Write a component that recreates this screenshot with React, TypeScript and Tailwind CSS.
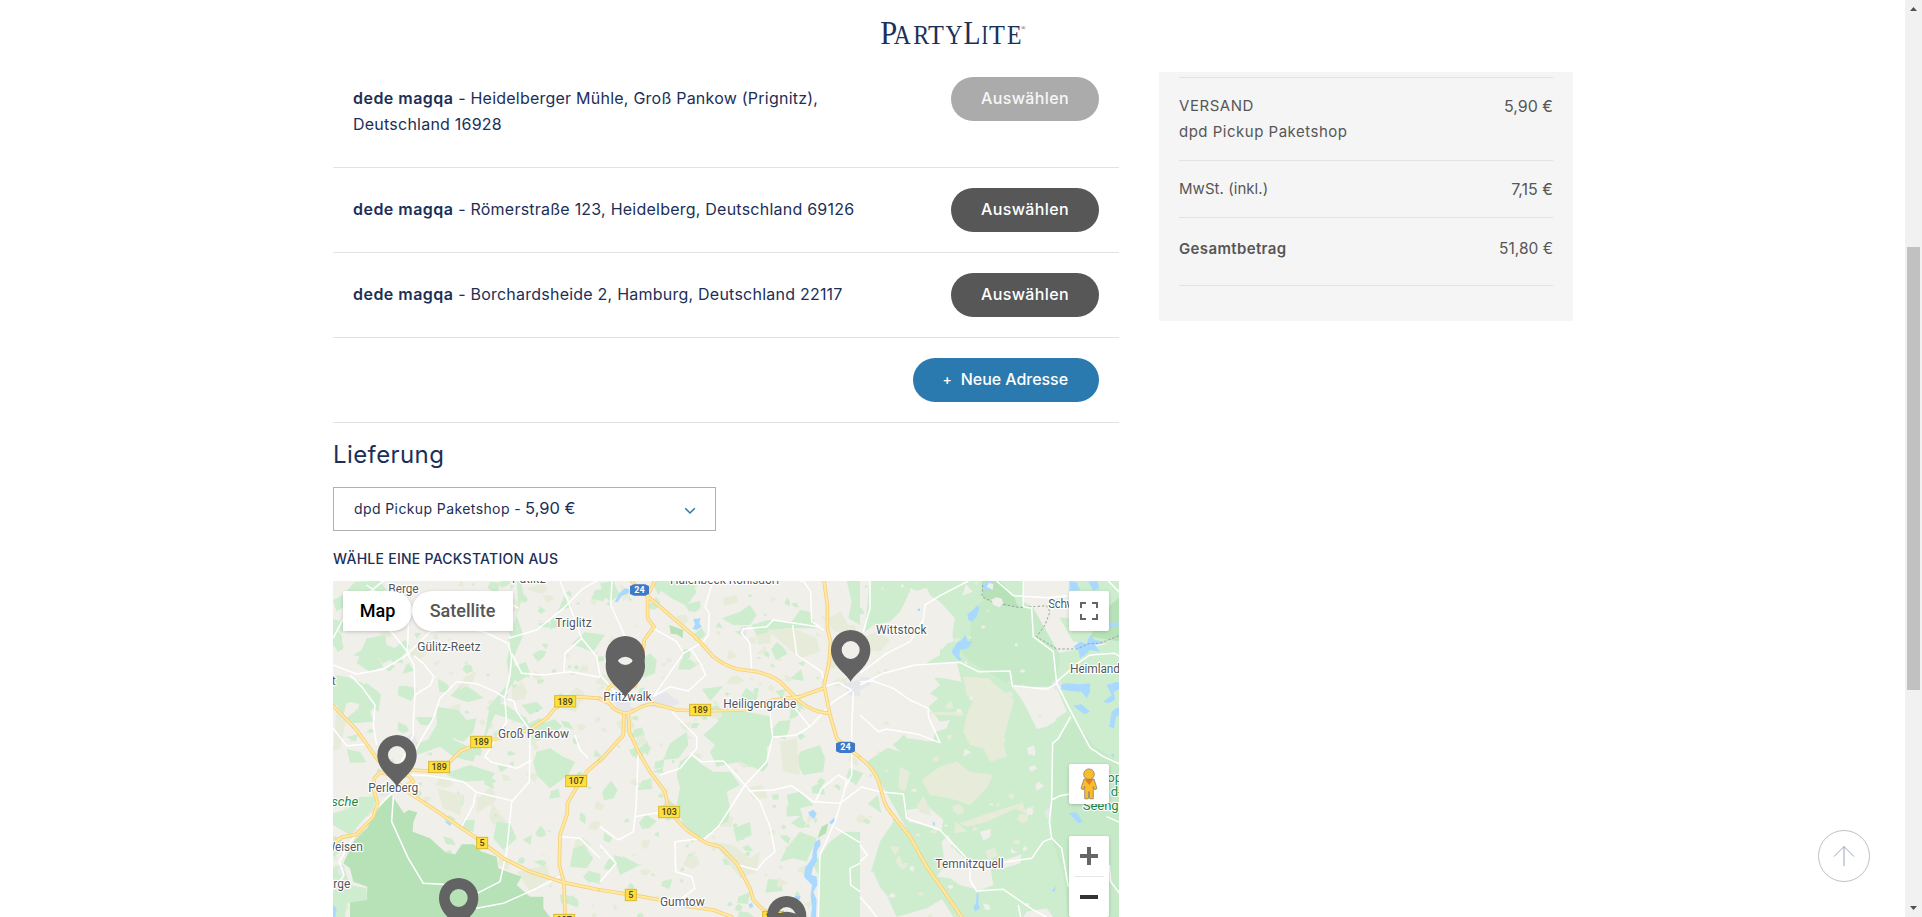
import React from "react";

type Shape = { fill: string; d: string };

const GREEN = "#ceedcf";
const FOREST = "#b7e2b8";
const DRY = "#e7ecda";
const LAND = "#f0efea";
const WATER = "#a9d9ff";
const TOWN = "#e6e7eb";

/* Small deterministic generator for the field and grove texture. */
function makePatches(count: number, x0: number, x1: number, seed: number, colors: string[], size: number): Shape[] {
  let s = seed;
  const rnd = () => {
    s = (s * 16807) % 2147483647;
    return s / 2147483647;
  };
  const out: Shape[] = [];
  for (let i = 0; i < count; i++) {
    const cx = x0 + rnd() * (x1 - x0);
    const cy = 18 + rnd() * 1008;
    const r = 5 + rnd() * rnd() * size;
    const n = 3 + Math.floor(rnd() * 4);
    const turn = rnd() * 6;
    const pts: string[] = [];
    for (let k = 0; k < n; k++) {
      const a = turn + (k / n) * Math.PI * 2;
      const q = r * (0.4 + rnd() * 1.1);
      pts.push(`${(cx + Math.cos(a) * q * 1.2).toFixed(0)},${(cy + Math.sin(a) * q).toFixed(0)}`);
    }
    out.push({ fill: colors[Math.floor(rnd() * colors.length)], d: `M${pts.join("L")}Z` });
  }
  return out;
}

const fields = makePatches(420, 9, 1640, 4711, [GREEN, DRY, GREEN, DRY, GREEN], 34);
const eastFields = makePatches(70, 1640, 2130, 977, [DRY, LAND], 20);

const west: Shape[] = [
  { fill: GREEN, d: "M9,75L40,60L75,20L150,18L170,45L120,60L140,85L90,100L60,80L20,110Z" },
  { fill: GREEN, d: "M110,190L165,180L170,210L145,250L160,275L120,290L80,265Z" },
  { fill: GREEN, d: "M180,230L225,195L240,215L215,245L220,265L185,262Z" },
  { fill: GREEN, d: "M9,300L50,305L100,325L75,355L90,370L50,385L40,420L20,390L9,395Z" },
  { fill: GREEN, d: "M95,355L140,345L145,375L120,410L130,440L70,445L50,430L85,400Z" },
  { fill: GREEN, d: "M320,395L385,405L410,435L440,430L430,470L400,500L370,490L330,505L290,500L320,450Z" },
  { fill: GREEN, d: "M260,505L340,480L395,505L440,530L430,560L370,545L330,515L260,540Z" },
  { fill: GREEN, d: "M360,590L420,570L495,595L480,615L400,620L350,600Z" },
  { fill: GREEN, d: "M530,350L560,310L550,250L580,180L560,120L580,60L575,20L560,18L565,90L550,160L530,260L540,320L480,390L460,500L490,430Z" },
  { fill: GREEN, d: "M470,400L500,380L535,395L590,430L600,455L560,440L490,415Z" },
  { fill: GREEN, d: "M620,530L660,520L700,545L735,560L715,600L660,640L620,600L610,560Z" },
  { fill: GREEN, d: "M9,715L60,700L90,665L140,665L130,700L60,780L9,750Z" },
  { fill: GREEN, d: "M730,820L760,810L790,850L770,880L720,875Z" },
  { fill: GREEN, d: "M500,740L540,745L560,790L520,825L490,790Z" },
  { fill: GREEN, d: "M575,390L620,380L640,400L600,420Z" },
  { fill: DRY, d: "M20,390L50,430L30,520L9,530Z" },
  { fill: DRY, d: "M560,890L650,870L660,910L600,950Z" },
  { fill: DRY, d: "M320,640L400,660L390,720L340,700Z" },
  { fill: FOREST, d: "M158,680L185,660L212,700L222,715L235,705L262,712L250,742L248,770L300,790L348,833L376,838L395,808L432,808L455,830L500,845L505,880L545,895L575,905L560,930L600,965L640,965L640,1000L660,1026L60,1026L60,975L110,975L112,935L70,920L60,880L40,865L70,800L110,760Z" },
  { fill: GREEN, d: "M9,880L40,870L60,930L110,940L110,975L50,985L45,1026L9,1026Z" },
  { fill: WATER, d: "M9,990L20,1000L16,1026L9,1026Z" },
  { fill: WATER, d: "M345,737L352,740L364,746L360,753L347,742Z" },
  { fill: WATER, d: "M617,404L626,408L622,412Z" },
  { fill: TOWN, d: "M140,640L170,632L180,660L150,668Z" },
  { fill: TOWN, d: "M222,490L250,475L262,500L236,516Z" },
  { fill: TOWN, d: "M512,360L535,358L530,382L512,380Z" },
  { fill: TOWN, d: "M22,880L45,875L42,895L28,903Z" },
];

const middle: Shape[] = [
  { fill: GREEN, d: "M0,25L40,18L60,60L30,80L10,60Z" },
  { fill: GREEN, d: "M365,130L420,110L450,90L470,120L450,150L400,150Z" },
  { fill: GREEN, d: "M455,150L505,135L575,140L600,105L630,110L650,160L560,160L470,180Z" },
  { fill: GREEN, d: "M130,250L150,235L170,255L165,295L130,310Z" },
  { fill: GREEN, d: "M310,480L365,430L365,410L440,410L515,425L510,460L530,480L515,500L500,520L505,570L490,590L420,560L350,575L330,530L345,510Z" },
  { fill: GREEN, d: "M210,505L260,470L265,510L235,550L190,555Z" },
  { fill: GREEN, d: "M240,560L270,540L300,565L340,590L390,590L420,630L380,650L390,700L385,740L340,760L300,800L250,750L230,690L240,640L230,600Z" },
  { fill: GREEN, d: "M600,530L660,510L675,550L670,590L610,600L590,560Z" },
  { fill: GREEN, d: "M560,660L600,650L640,690L600,700L610,730L570,710Z" },
  { fill: GREEN, d: "M740,18L780,18L780,150L745,130L755,80Z" },
  { fill: GREEN, d: "M690,800L730,770L780,770L780,1026L655,1026L655,900L640,870Z" },
  { fill: GREEN, d: "M600,770L650,790L620,860L580,850L540,860L560,820Z" },
  { fill: GREEN, d: "M400,760L450,740L455,780L410,800Z" },
  { fill: GREEN, d: "M40,840L80,850L120,870L60,900Z" },
  { fill: DRY, d: "M500,165L580,160L650,190L660,230L600,250L560,215Z" },
  { fill: DRY, d: "M340,800L400,810L450,850L480,830L470,890L420,910Z" },
  { fill: DRY, d: "M540,500L590,490L600,600L550,590Z" },
  { fill: FOREST, d: "M208,150L250,165L248,190L230,178L212,176Z" },
  { fill: FOREST, d: "M652,790L665,755L685,745L678,775Z" },
  { fill: WATER, d: "M280,132L302,130L298,145L305,155L290,165L278,162L285,148Z" },
  { fill: WATER, d: "M44,80L58,55L75,40L88,42L85,55L66,62L52,82Z" },
  { fill: WATER, d: "M625,712L640,704L650,716L642,732L630,722Z" },
  { fill: WATER, d: "M688,742L702,728L706,740L692,748Z" },
  { fill: WATER, d: "M585,963L601,962L600,974L586,974Z" },
  { fill: WATER, d: "M446,988L456,984L460,995L450,1000Z" },
  { fill: WATER, d: "M645,800L660,792L662,808L650,830L652,855L638,880L634,900L650,905L652,930L640,950L650,975L648,1026L632,1026L636,1000L632,960L636,930L612,905L615,880L636,850L640,820Z" },
  { fill: TOWN, d: "M140,370L200,350L240,385L200,400L150,395Z" },
  { fill: TOWN, d: "M40,375L90,380L95,410L55,408Z" },
  { fill: TOWN, d: "M730,325L780,315L780,365L745,360Z" },
  { fill: TOWN, d: "M420,155L440,152L440,178L424,180Z" },
];

const east: Shape[] = [
  { fill: GREEN, d: "M28,18L150,18L150,50L120,110L90,140L40,150L15,170Z" },
  { fill: GREEN, d: "M100,18L500,18L500,60L560,240L786,200L786,1026L280,1026L200,900L150,780L60,620L20,560L50,540L110,500L140,470L110,440L240,330L190,270L240,240L240,210L280,200L270,120L210,90L200,60Z" },
  { fill: GREEN, d: "M786,18L786,210L640,200L600,130L630,18Z" },
  { fill: GREEN, d: "M60,660L150,780L200,880L250,970L200,1000L110,1026L80,960L30,900L60,800L100,740Z" },
  { fill: "#c6e9c8", d: "M335,110L375,70L520,100L600,240L590,330L520,340L450,330L400,300L330,260L300,225L330,190Z" },
  { fill: "#c6e9c8", d: "M580,500L640,430L700,510L786,570L786,1026L625,1026L610,900L575,790Z" },
  { fill: FOREST, d: "M365,18L420,18L460,60L475,98L430,92L370,70Z" },
  { fill: FOREST, d: "M740,100L786,60L786,200L690,185Z" },
  { fill: LAND, d: "M130,100L145,55L200,38L210,60L240,80L285,130L275,190L245,225L215,205L190,150L165,115Z" },
  { fill: LAND, d: "M490,18L625,18L630,130L580,125L520,95L490,80Z" },
  { fill: LAND, d: "M0,290L60,250L110,220L140,200L150,240L200,270L290,260L305,320L250,310L180,305L110,330L150,370L200,350L235,370L205,395L240,440L270,435L260,460L215,475L220,500L140,490L120,460L60,470L120,530L60,510L0,545Z" },
  { fill: LAND, d: "M455,335L590,335L620,410L590,430L585,440L560,455L530,462L500,400L480,365Z" },
  { fill: LAND, d: "M390,462L410,464L407,488L389,484Z" },
  { fill: LAND, d: "M505,578L522,570L532,580L515,590Z" },
  { fill: LAND, d: "M360,770L392,762L392,785L370,797Z" },
  { fill: LAND, d: "M140,705L205,695L250,735L245,765L190,750L145,740Z" },
  { fill: LAND, d: "M245,800L265,780L290,830L330,860L390,870L400,930L360,945L300,930L270,910L230,905L255,870Z" },
  { fill: LAND, d: "M420,860L485,838L480,865L430,880Z" },
  { fill: LAND, d: "M0,780L40,760L110,705L100,730L60,790L20,850L0,850Z" },
  { fill: LAND, d: "M0,900L40,890L70,960L80,1026L0,1026Z" },
  { fill: LAND, d: "M500,1010L560,1000L580,1026L490,1026Z" },
  { fill: DRY, d: "M310,305L385,310L400,325L462,375L440,455L430,500L440,545L390,560L370,520L330,510L310,470L320,420L340,375L320,360Z" },
  { fill: DRY, d: "M185,615L240,575L290,560L330,590L400,600L380,640L330,690L270,670L210,660Z" },
  { fill: DRY, d: "M300,745L370,720L480,685L470,700L380,740L320,755Z" },
  { fill: DRY, d: "M0,190L50,170L90,195L60,230L0,220Z" },
  { fill: DRY, d: "M120,575L150,590L135,650L115,640Z" },
  { fill: DRY, d: "M205,412L310,412L310,422L205,418Z" },
  { fill: WATER, d: "M322,118L342,102L352,90L358,98L350,125L335,140L325,135Z" },
  { fill: WATER, d: "M275,228L290,205L305,195L315,180L325,200L338,198L325,220L300,225L298,245L306,252L298,258L280,240Z" },
  { fill: WATER, d: "M370,25L395,18L402,35L390,47L372,42Z" },
  { fill: WATER, d: "M628,18L650,22L660,45L630,48Z" },
  { fill: WATER, d: "M685,20L712,18L718,40L700,47Z" },
  { fill: WATER, d: "M725,100L740,125L752,145L770,140L780,150L740,160L715,135Z" },
  { fill: WATER, d: "M640,215L660,200L680,205L690,180L705,195L735,200L705,210L720,230L690,225L675,240L660,250L655,225Z" },
  { fill: WATER, d: "M600,330L620,325L660,328L690,325L690,350L680,370L665,350L630,348L600,342Z" },
  { fill: WATER, d: "M640,392L665,388L690,410L675,418L655,405Z" },
  { fill: WATER, d: "M740,330L770,320L786,325L786,340L762,350L765,375L745,385L730,380L755,360Z" },
  { fill: WATER, d: "M755,410L770,398L786,400L786,415L768,425L762,460L748,455Z" },
  { fill: WATER, d: "M625,715L650,712L668,740L655,745L640,728Z" },
  { fill: WATER, d: "M350,955L356,955L355,985L360,1000L345,1010L340,995L348,985Z" },
  { fill: WATER, d: "M575,948L588,934L584,950Z" },
  { fill: WATER, d: "M172,102L180,100L180,108L174,108Z" },
  { fill: WATER, d: "M752,540L762,536L762,548Z" },
  { fill: WATER, d: "M218,742L225,742L224,752L219,751Z" },
  { fill: TOWN, d: "M575,322L600,312L605,340L585,345Z" },
  { fill: TOWN, d: "M0,305L35,310L30,330L0,345Z" },
  { fill: TOWN, d: "M555,705L570,698L572,725L558,728Z" },
];

const westLanes = [
  "M9,190L40,130L70,90L160,18",
  "M9,270L80,297L160,283L230,240L300,170L395,155L460,170L535,205",
  "M236,120L232,235L252,270L255,360L250,440L250,480L215,560",
  "M240,240L180,165L150,60L110,30",
  "M535,205L545,245L540,300L524,368L495,350L440,326L380,320L330,370L310,430L270,500L238,560",
  "M252,363L270,350L300,332L312,305L280,265L252,242",
  "M524,370L530,440L465,545L485,562L560,580L605,555",
  "M530,372L552,378L560,410L600,465L598,620L545,680L530,830L522,865L510,920L422,965L382,930L280,925L235,850L185,740L190,665",
  "M240,600L300,602L400,620L440,652L545,677",
  "M436,655L430,690L395,755",
  "M190,650L145,695L65,795L28,860L42,900L9,945",
  "M690,18L722,100L755,190L705,235L702,290",
  "M545,235L575,295L640,300L720,290L810,307",
  "M400,150L440,75L500,60L565,100M535,190L620,165L700,100L760,40L800,18",
  "M735,480L750,525L775,550",
  "M9,460L50,512L105,508L150,560",
  "M60,300L95,335L135,390L130,450L140,510",
  "M692,785L750,790L810,850",
  "M420,965L440,1000L520,985L620,940L690,905",
  "M755,190L800,245L810,300",
];

const middleLanes = [
  "M36,18L32,90L60,150L75,185",
  "M160,160L230,200L250,235L160,365",
  "M335,30L315,95L328,115L325,180L310,200L250,235",
  "M275,225L300,262L317,300L265,348L210,335L160,365",
  "M600,18L610,18L632,50L635,140L660,155",
  "M455,285L450,205L425,175L430,162L500,155L520,135L655,155L672,165",
  "M578,150L590,240L665,290L670,310",
  "M672,335L715,322L755,345L700,380L630,455L590,480L518,487L500,560L435,630L355,755L310,795",
  "M510,410L518,487M585,400L630,455",
  "M215,410L290,485L290,520L240,580L180,600",
  "M270,535L305,560L370,558L435,630L480,680L510,755L525,830L495,855L470,885L415,870",
  "M445,648L520,645L575,632L640,680L720,685L780,640",
  "M645,682L665,640L715,600L740,615L730,660L705,740L660,840L655,1026",
  "M115,530L108,700L100,770L55,795L0,755M103,725L205,708",
  "M310,790L225,800L227,890L275,905L285,940L245,970",
  "M760,350L755,460L755,600L735,640",
  "M0,810L48,865L0,920",
  "M705,757L780,803M780,865L750,880L752,930L780,950",
  "M0,300L40,345L60,370",
];

const eastLanes = [
  "M30,18L30,100L10,170",
  "M0,295L80,235L150,200L190,135L195,90L240,62L325,18",
  "M0,330L70,295L165,270L300,262L355,290L450,288L457,332L560,343L590,325",
  "M0,320L40,318L100,340L150,375L205,400L205,425L240,503L175,478L80,462L55,470L0,420",
  "M410,18L460,62L560,68L622,62M490,18L490,95L515,100L520,185L580,230L590,325L625,395L690,518L730,545L786,570",
  "M590,320L660,260L690,240L765,235L786,250",
  "M632,425L595,490L578,505L575,675L568,740L575,790L605,820L625,935",
  "M575,675L600,662L630,657",
  "M0,635L60,650L130,657L140,730L240,765L330,860L330,915L350,948L430,943L520,1005L560,1026",
  "M430,862L515,850L550,800L575,790",
  "M740,725L786,745M748,870L752,920L786,965",
  "M0,810L22,840L0,860M0,965L30,1000L50,1026",
  "M475,990L482,1026M745,18L786,60",
];

const westHighways = [
  "M9,392L80,465L140,550L195,615L240,655L330,715L440,790L520,850L600,890L700,922L810,945",
  "M9,805L35,787L80,778L130,725L143,685L130,640L133,610L150,592L200,605L215,592L240,585L295,588L355,565L392,528L455,502L540,482L600,463L650,430L675,400L740,365L810,370",
  "M810,555L770,590L750,620L712,685L712,715L690,780L688,870L702,922L705,1026",
  "M200,610L235,600L250,620L232,630",
];

const middleHighways = [
  "M95,18L120,45L180,95L290,190L340,245Q370,270 410,282L470,290Q530,305 550,330L600,380Q640,412 685,415",
  "M165,18L143,60L143,130L162,155L133,195L125,260L105,335",
  "M0,372L28,385Q45,412 80,415Q100,410 115,400Q145,385 165,387L230,405L300,408L430,405L520,375L600,365L670,340",
  "M45,325Q5,345 28,385",
  "M72,415L70,480L0,557",
  "M85,415L88,470L115,530L150,590L195,650L207,710L260,765L320,805L360,815L410,865L450,940L460,975L490,1005L540,1026",
  "M672,18L682,90L682,160L692,200L688,260L672,330L690,420L710,490L745,520L780,548",
  "M0,945L110,962L180,975L270,995L340,1005L395,1026",
];

const eastHighways = ["M0,548Q50,585 62,640T90,710L150,785L200,875L260,960L305,1026"];

function Lanes({ paths }: { paths: string[] }) {
  return (
    <g fill="none" stroke="#ffffff" strokeWidth={4.5} strokeLinejoin="round">
      {paths.map((d) => (
        <path key={d} d={d} />
      ))}
    </g>
  );
}

function Highways({ paths }: { paths: string[] }) {
  return (
    <g fill="none" strokeLinejoin="round" strokeLinecap="round">
      {paths.map((d) => (
        <path key={d} d={d} stroke="#f7cf77" strokeWidth={11} />
      ))}
      {paths.map((d) => (
        <path key={d} d={d} stroke="#ffe9a3" strokeWidth={6} />
      ))}
    </g>
  );
}

function Shapes({ items }: { items: Shape[] }) {
  return (
    <g>
      {items.map((s, i) => (
        <path key={i} d={s.d} fill={s.fill} />
      ))}
    </g>
  );
}

function Place({ x, y, w, children }: { x: number; y: number; w: number; children: string }) {
  return (
    <text
      x={x}
      y={y}
      textLength={w}
      className="fill-[#50565e] stroke-white font-['Roboto',sans-serif] text-[36px] [paint-order:stroke]"
      strokeWidth={7}
      strokeLinejoin="round"
    >
      {children}
    </text>
  );
}

function Shield({ x, y, w, children }: { x: number; y: number; w: number; children: string }) {
  return (
    <g>
      <rect x={x} y={y} width={w} height={34} fill="#ffdf3d" stroke="#d9b92c" strokeWidth={3} />
      <text x={x + w / 2} y={y + 27} textAnchor="middle" className="fill-[#4a4220] font-['Roboto',sans-serif] text-[27px] font-medium">
        {children}
      </text>
    </g>
  );
}

function Autobahn({ x, y }: { x: number; y: number }) {
  return (
    <g>
      <path d={`M${x},${y + 5}L${x + 12},${y}H${x + 45}L${x + 57},${y + 5}V${y + 29}L${x + 45},${y + 34}H${x + 12}L${x},${y + 29}Z`} fill="#3d78c9" />
      <text x={x + 28.5} y={y + 26} textAnchor="middle" className="fill-white font-['Roboto',sans-serif] text-[27px] font-bold">
        24
      </text>
    </g>
  );
}

function Pin({ x, y }: { x: number; y: number }) {
  return (
    <path
      transform={`translate(${x} ${y})`}
      fillRule="evenodd"
      fill="#636363"
      d="M0,95C-14,68 -59,48 -59,0A59,60 0 0 1 59,0C59,48 14,68 0,95ZM0,-27A27,27 0 1 0 0,27A27,27 0 1 0 0,-27Z"
    />
  );
}

function MapCanvas() {
  return (
    <svg viewBox="9 18 2358 1008" className="absolute inset-0 h-[336px] w-[786px]">
      <rect x={9} y={18} width={2358} height={1008} fill={LAND} />
      <Shapes items={fields} />
      <Shapes items={west} />
      <g transform="translate(810 0)">
        <Shapes items={middle} />
      </g>
      <g transform="translate(1590 0)">
        <Shapes items={east} />
        <path
          d="M368,30L366,65L400,82L480,98L560,92L570,110L555,150L530,185L590,222L650,222L690,205L720,205L786,178"
          fill="none"
          stroke="#9a9fa0"
          strokeWidth={3}
          strokeDasharray="7 6"
        />
      </g>
      <Shapes items={eastFields} />
      <Lanes paths={westLanes} />
      <g transform="translate(810 0)">
        <Lanes paths={middleLanes} />
      </g>
      <g transform="translate(1590 0)">
        <Lanes paths={eastLanes} />
      </g>
      <Highways paths={westHighways} />
      <g transform="translate(810 0)">
        <Highways paths={middleHighways} />
      </g>
      <g transform="translate(1590 0)">
        <Highways paths={eastHighways} />
      </g>

      <Shield x={674} y={362} w={63}>189</Shield>
      <Shield x={422} y={484} w={63}>189</Shield>
      <Shield x={296} y={559} w={63}>189</Shield>
      <Shield x={707} y={601} w={63}>107</Shield>
      <Shield x={440} y={787} w={33}>5</Shield>
      <Shield x={671} y={1018} w={63}>107</Shield>
      <Shield x={1079} y={388} w={63}>189</Shield>
      <Shield x={986} y={694} w={63}>103</Shield>
      <Shield x={886} y={943} w={33}>5</Shield>
      <Shield x={1298} y={1009} w={63}>103</Shield>
      <Autobahn x={900} y={28} />
      <Autobahn x={1518} y={500} />

      <Place x={175} y={55} w={91}>Berge</Place>
      <Place x={546} y={25} w={101}>Putlitz</Place>
      <Place x={676} y={157} w={109}>Triglitz</Place>
      <Place x={262} y={229} w={190}>Gülitz-Reetz</Place>
      <Place x={504} y={490} w={213}>Groß Pankow</Place>
      <Place x={115} y={652} w={150}>Perleberg</Place>
      <Place x={-16} y={829} w={115}>Weisen</Place>
      <Place x={10} y={940} w={51}>rge</Place>
      <Place x={5} y={330} w={11}>t</Place>
      <Place x={1020} y={27} w={330}>Halenbeck-Rohlsdorf</Place>
      <Place x={820} y={379} w={145}>Pritzwalk</Place>
      <Place x={1180} y={400} w={219}>Heiligengrabe</Place>
      <Place x={990} y={994} w={134}>Gumtow</Place>
      <Place x={1638} y={178} w={152}>Wittstock</Place>
      <Place x={2155} y={100} w={125}>Schwarz</Place>
      <Place x={2220} y={295} w={150}>Heimland</Place>
      <Place x={1816} y={880} w={205}>Temnitzquell</Place>
      <g className="fill-[#188a45] stroke-white font-['Roboto',sans-serif] text-[39px] [paint-order:stroke]" strokeWidth={6}>
        <text x={4} y={692} className="italic">sche</text>
        <text x={2332} y={621}>op</text>
        <text x={2342} y={663}>d-</text>
        <text x={2258} y={706}>Seeng</text>
      </g>

      <Pin x={201} y={540} />
      <Pin x={386} y={969} />
      <Pin x={886} y={243} />
      <Pin x={886} y={272} />
      <Pin x={1562} y={225} />
      <Pin x={1370} y={1023} />
      <Pin x={1370} y={1070} />
    </svg>
  );
}

function MapSection() {
  return (
    <section className="relative h-[336px] w-[786px] overflow-hidden">
      <MapCanvas />
      <div className="absolute left-[10px] top-[10px] flex h-10 font-['Roboto',sans-serif] text-[18px] font-medium">
        <button className="w-[69px] rounded-r-[20px] bg-white pb-[2px] text-black shadow-[0_1px_4px_-1px_rgba(0,0,0,0.3)]">Map</button>
        <button className="w-[101px] rounded-l-[20px] bg-white pb-[2px] text-[#565656] shadow-[0_1px_4px_-1px_rgba(0,0,0,0.3)]">Satellite</button>
      </div>
      <button className="absolute right-[10px] top-[10px] flex size-10 items-center justify-center rounded-[2px] bg-white shadow-[0_1px_4px_-1px_rgba(0,0,0,0.3)]">
        <svg viewBox="0 0 18 18" className="size-[18px]" fill="#666666">
          <path d="M0 0v6h2V2h4V0H0zm16 0h-4v2h4v4h2V0h-2zm0 16h-4v2h6v-6h-2v4zM2 12H0v6h6v-2H2v-4z" />
        </svg>
      </button>
      <button className="absolute right-[10px] top-[183px] flex size-10 items-center justify-center rounded-[2px] bg-white shadow-[0_1px_4px_-1px_rgba(0,0,0,0.3)]">
        <svg viewBox="0 0 18 32" className="h-8 w-[18px]" fill="#fbbc2c" stroke="#7d7460" strokeWidth={0.7}>
          <path d="M4 11h10l3 9.600-2.200 1.200-1.500-3.300v12.300H9.700L9 23.500l-.7 7.300H4.700V18.500l-1.500 3.300L1 20.600z" />
          <path d="M4.800 11.400h8.400L9.200 17z" fill="#e0802b" stroke="none" />
          <circle cx="9" cy="6.200" r="5.300" />
        </svg>
      </button>
      <div className="absolute right-[10px] top-[255px] flex h-[81px] w-10 flex-col items-center rounded-[2px] bg-white shadow-[0_1px_4px_-1px_rgba(0,0,0,0.3)]">
        <button className="flex h-10 items-center">
          <svg viewBox="0 0 18 18" className="size-[18px]" fill="#666666">
            <path d="M7 0h4v7h7v4h-7v7H7v-7H0V7h7z" />
          </svg>
        </button>
        <div className="h-px w-[30px] bg-[#e6e6e6]" />
        <button className="flex h-10 items-center">
          <span className="block h-1 w-[18px] bg-[#333333]" />
        </button>
      </div>
    </section>
  );
}

function AddressRow({ address, muted, first }: { address: string; muted?: boolean; first?: boolean }) {
  return (
    <div className={`flex items-start justify-between border-b border-[#e2e2e2] px-5 ${first ? "h-[96px] pt-[5px]" : "h-[85px] pt-5"}`}>
      <p className="w-[530px] pt-2 text-[16px] leading-[26px] tracking-[0.23px] text-[#1c2f57]">
        <b className="font-semibold tracking-[0.47px]">dede magqa</b>
        {" - "}
        {address}
      </p>
      <button
        className={`h-11 w-[148px] rounded-full pb-[2px] text-[16px] font-medium tracking-[0.4px] ${muted ? "bg-[#ababab] text-[#f7f7f7]" : "bg-[#575757] text-white"}`}
      >
        Auswählen
      </button>
    </div>
  );
}

const logoLetters: { c: string; x: number; w: number; big?: boolean }[] = [
  { c: "P", x: 2.2, w: 17, big: true },
  { c: "A", x: 15.8, w: 17 },
  { c: "R", x: 35.2, w: 16 },
  { c: "T", x: 50, w: 15.9 },
  { c: "Y", x: 67.5, w: 17 },
  { c: "L", x: 85.5, w: 17, big: true },
  { c: "I", x: 103.5, w: 6.5 },
  { c: "T", x: 111, w: 15.9 },
  { c: "E", x: 129, w: 14.5 },
];

function Logo() {
  return (
    <svg viewBox="0 0 150 32" className="h-8 w-[150px] overflow-visible">
      <g className="fill-[#1a3158] font-['Liberation_Serif',serif]">
        {logoLetters.map((l) => (
          <text key={l.x} x={l.x} y={27.7} textLength={l.w} lengthAdjust="spacingAndGlyphs" className={l.big ? "text-[34px]" : "text-[27px]"}>
            {l.c}
          </text>
        ))}
        <text x="143" y="13.500" className="text-[6px]">®</text>
      </g>
    </svg>
  );
}

function Summary() {
  return (
    <aside className="h-[249px] w-[414px] bg-[#f5f5f5] px-5 pt-[5px] text-[15px] leading-[26px] text-[#575757]">
      <div className="flex h-[83px] justify-between border-t border-[#e2e2e2] pt-[15px]">
        <div>
          <p className="tracking-[0.55px]">VERSAND</p>
          <p className="tracking-[0.5px]">dpd Pickup Paketshop</p>
        </div>
        <p className="text-[16px]">5,90 €</p>
      </div>
      <div className="flex h-[57px] justify-between border-t border-[#e2e2e2] pt-[15px]">
        <p className="tracking-[0.05px]">MwSt. (inkl.)</p>
        <p className="text-[16px]">7,15 €</p>
      </div>
      <div className="flex h-[69px] justify-between border-y border-[#e2e2e2] pt-[18px]">
        <p className="font-semibold tracking-[0.36px]">Gesamtbetrag</p>
        <p className="text-[15.500px]">51,80 €</p>
      </div>
    </aside>
  );
}

function ScrollRail() {
  return (
    <div className="flex h-full w-[17px] shrink-0 flex-col items-center justify-between bg-[#f1f1f1]">
      <svg viewBox="0 0 17 17" className="size-[17px]" fill="#505050">
        <path d="M5 11h7L8.500 7z" />
      </svg>
      <div className="mb-auto mt-[230px] h-[443px] w-[13px] bg-[#c1c1c1]" />
      <svg viewBox="0 0 17 17" className="size-[17px]" fill="#505050">
        <path d="M5 6h7l-3.500 4z" />
      </svg>
    </div>
  );
}

export default function App() {
  return (
    <div className="flex h-[917px] w-[1922px] overflow-hidden bg-white font-['Inter',sans-serif]">
      <div className="relative flex-1">
        <header className="flex h-[72px] justify-center pt-4">
          <Logo />
        </header>
        <div className="flex gap-10 pl-[333px]">
          <main className="w-[786px]">
            <AddressRow first muted address="Heidelberger Mühle, Groß Pankow (Prignitz), Deutschland 16928" />
            <AddressRow address="Römerstraße 123, Heidelberg, Deutschland 69126" />
            <AddressRow address="Borchardsheide 2, Hamburg, Deutschland 22117" />
            <div className="flex h-[85px] justify-end border-b border-[#e2e2e2] px-5 pt-5">
              <button className="flex h-11 w-[186px] items-center justify-end gap-[9px] rounded-full bg-[#2a7ab0] pb-[2px] pr-[31px] text-[16px] font-medium text-white">
                <span className="text-[14px]">+</span>
                <span className="tracking-[-0.05px]">Neue Adresse</span>
              </button>
            </div>
            <h2 className="pt-[15px] text-[24px] leading-[34px] tracking-[0.4px] text-[#1c2f57]">Lieferung</h2>
            <div className="mt-[15px] flex h-11 w-[383px] items-center border border-[#b0b0b0] pl-5 pr-[19px] text-[#1c2f57]">
              <span className="pb-px text-[14px] tracking-[0.4px]">dpd Pickup Paketshop -</span>
              <span className="ml-1 pb-[2px] text-[16.500px]">5,90 €</span>
              <svg viewBox="0 0 12 8" className="ml-auto mt-1 h-2 w-3" fill="none" stroke="#2a7ab0" strokeWidth="1.500">
                <path d="M1.200 1.200L6 6l4.800-4.800" />
              </svg>
            </div>
            <h3 className="flex h-[50px] items-center pt-1 text-[14px] font-medium tracking-[0.26px] text-[#1c2f57]">WÄHLE EINE PACKSTATION AUS</h3>
            <MapSection />
          </main>
          <Summary />
        </div>
        <button className="absolute left-[1818px] top-[830px] flex size-[52px] items-center justify-center rounded-full border border-[#bfc1c4] bg-white">
          <svg viewBox="0 0 22 22" className="size-[22px]" fill="none" stroke="#9aa6ba">
            <path d="M11 21V1.500M1 11.500L11 1.500l10 10" />
          </svg>
        </button>
      </div>
      <ScrollRail />
    </div>
  );
}
